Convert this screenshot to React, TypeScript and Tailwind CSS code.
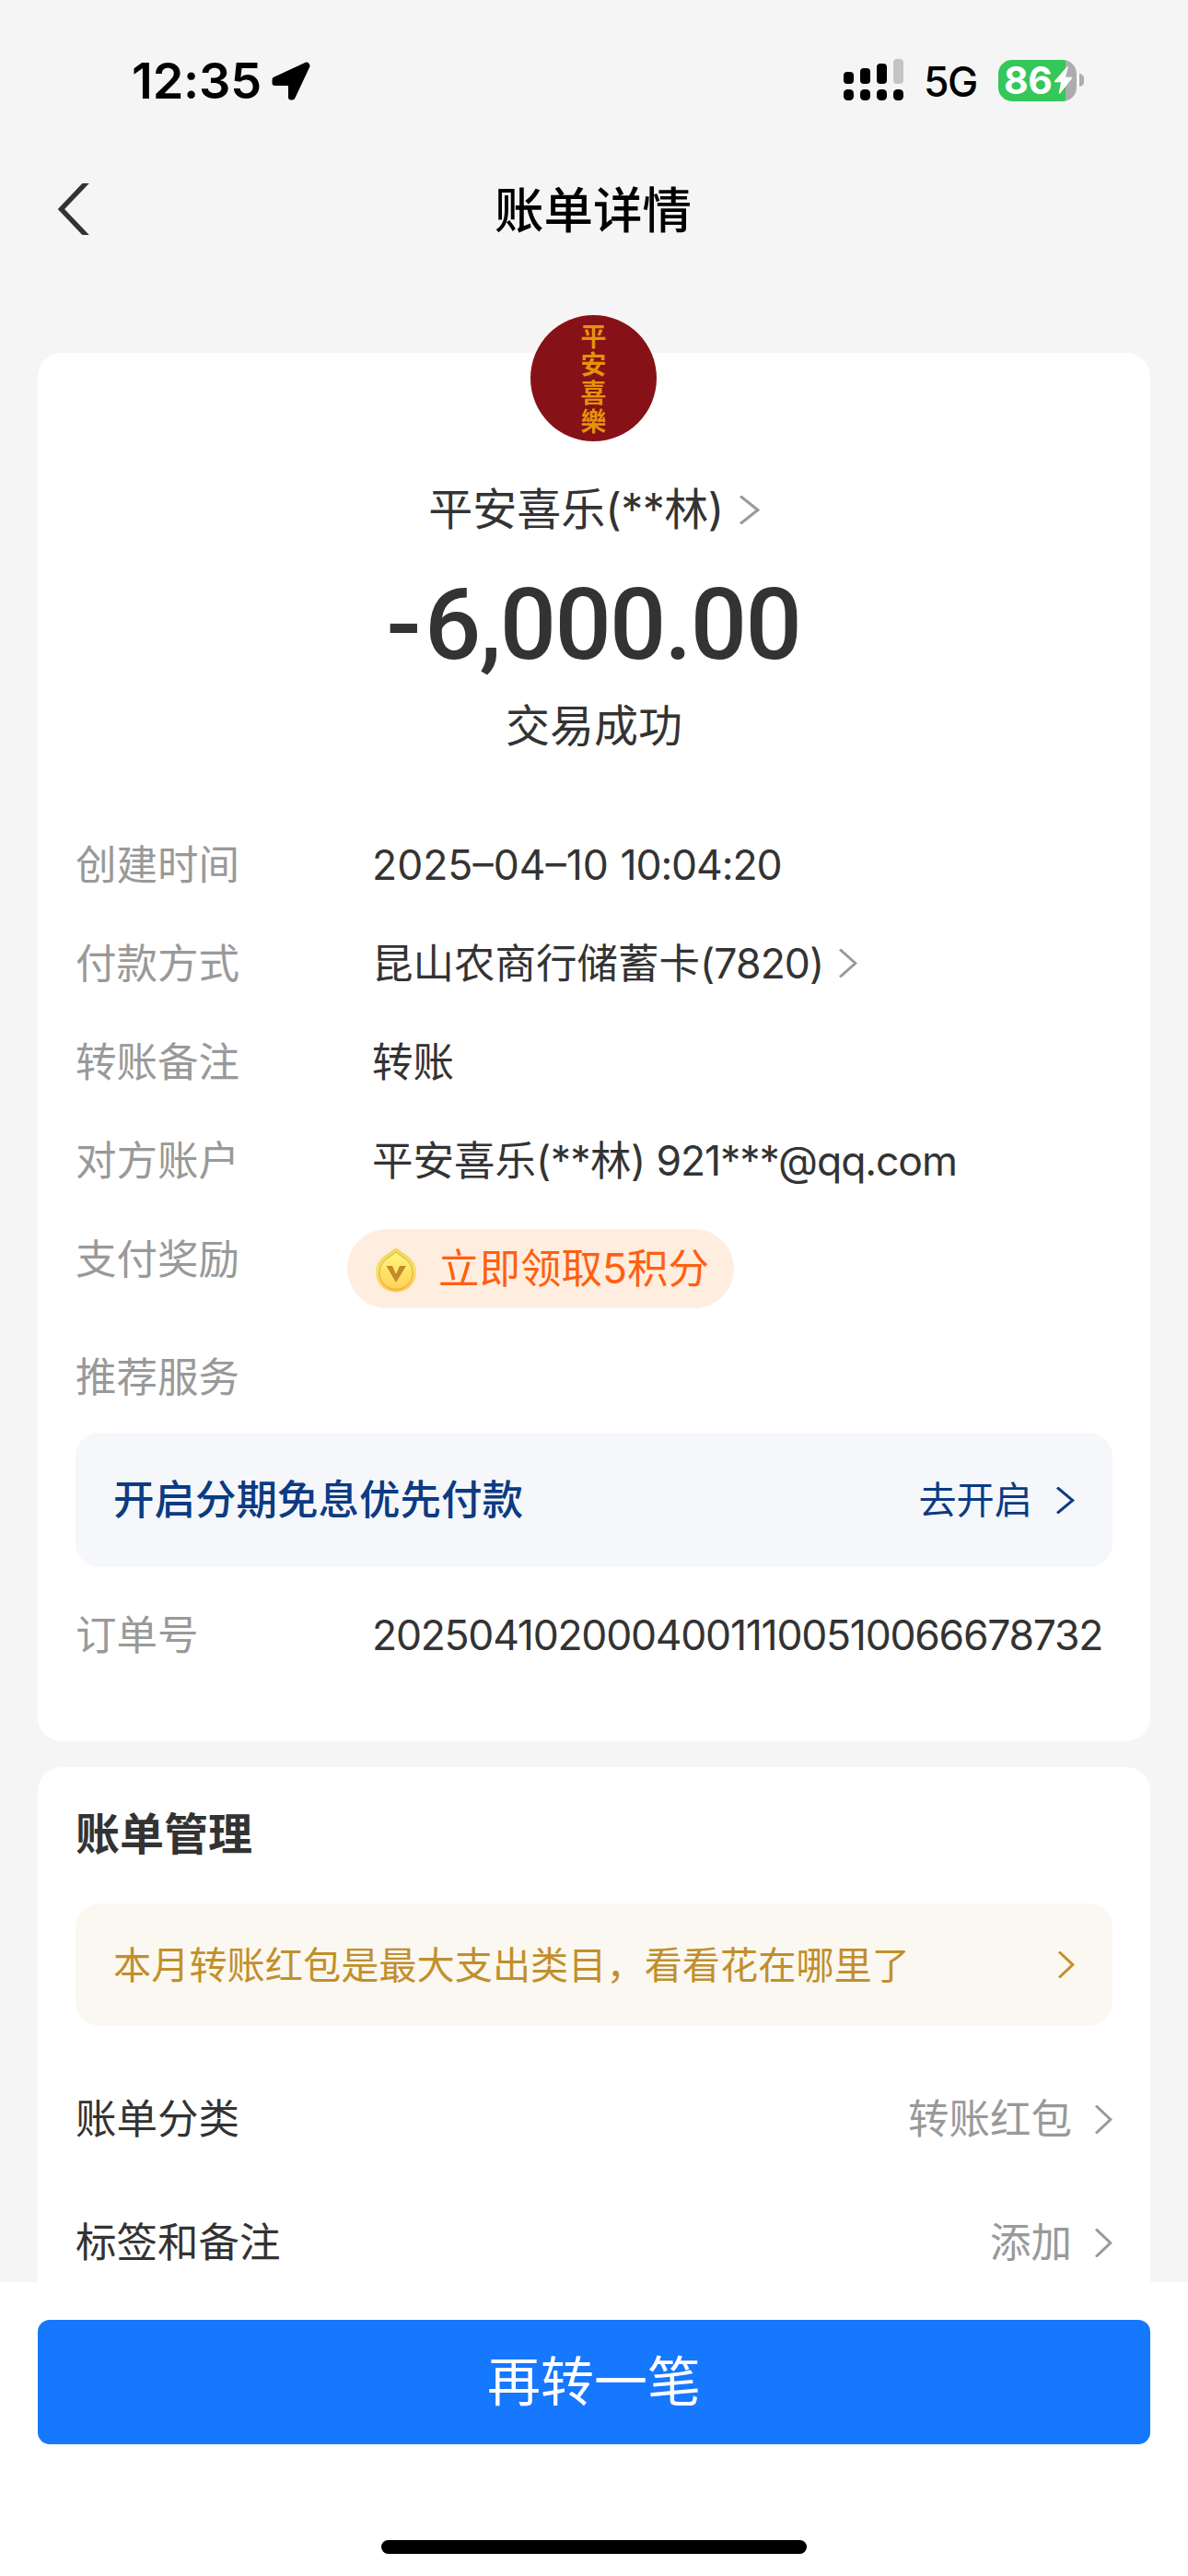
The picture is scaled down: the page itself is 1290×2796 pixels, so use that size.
import type { ReactNode } from "react";

function Chevron({ className = "", width = 20, height = 31, strokeWidth = 3 }: { className?: string; width?: number; height?: number; strokeWidth?: number }) {
  return (
    <svg className={className} width={width} height={height} viewBox={`0 0 ${width} ${height}`} fill="none" stroke="currentColor" strokeWidth={strokeWidth}>
      <path d={`M1 0.5 L${width - 2.2} ${height / 2} L1 ${height - 0.5}`} />
    </svg>
  );
}

function StatusBar() {
  return (
    <div className="flex h-[176px] items-start justify-between pt-[58px] pr-[113px] pl-[143px]">
      <div className="flex h-[60px] items-center">
        <span className="w-[152px] text-[54px] leading-[60px] font-semibold tracking-[-0.2px] whitespace-nowrap text-black">12:35</span>
        <svg width="42" height="42" viewBox="0 0 42 42">
          <path d="M38 3.5 L3.5 19.500 L3.5 23 L21 23 L21 38.5 L22.5 38.5 L38.500 4.5 Z" fill="#000" stroke="#000" strokeWidth="6" strokeLinejoin="round" />
        </svg>
      </div>
      <div className="flex h-[58px] items-center">
        <svg width="66" height="46" viewBox="0 0 66 46">
          <rect x="0" y="14" width="11" height="13" rx="4" />
          <rect x="18" y="10" width="11" height="17" rx="4" />
          <rect x="36" y="5" width="11" height="22" rx="4" />
          <rect x="54" y="0" width="11" height="27" rx="4" fill="#c4c4c4" />
          <rect x="0" y="33" width="11" height="12" rx="4.5" />
          <rect x="18" y="33" width="11" height="12" rx="4.5" />
          <rect x="36" y="33" width="11" height="12" rx="4.5" />
          <rect x="54" y="33" width="11" height="12" rx="4.5" />
        </svg>
        <span className="ml-[21px] w-[81px] pt-1 text-[44.5px] leading-[54px] font-medium tracking-[-1.5px] text-black">5G</span>
        <div className="flex items-center gap-[3px]">
          <div className="flex h-[45px] w-[85px] items-center rounded-[15px] bg-[linear-gradient(90deg,#34c759_73px,#adadad_73px)] pl-[6px]">
            <span className="w-[54px] text-[41px] leading-[45px] font-bold tracking-[-0.5px] text-white">86</span>
            <svg width="21" height="30" viewBox="0 0 21 30" fill="#fff" stroke="#fff" strokeWidth="1.5" strokeLinejoin="round">
              <path d="M15 1 L1.5 16.5 H9 L6.5 29 L19.5 12.5 H12 Z" />
            </svg>
          </div>
          <div className="h-[14px] w-[5px] rounded-r-[6px] bg-[#adadad]" />
        </div>
      </div>
    </div>
  );
}

function Row({ label, children }: { label: string; children?: ReactNode }) {
  return (
    <div className="flex h-[107px] items-center">
      <div className="w-[322px] shrink-0 text-[#999]">{label}</div>
      <div className="flex items-center whitespace-pre">{children}</div>
    </div>
  );
}

function PointsIcon() {
  return (
    <svg className="mt-1" width="44" height="50" viewBox="0 0 44 50">
      <defs>
        <linearGradient id="coin" x1="0" y1="0" x2="0" y2="1">
          <stop offset="0" stopColor="#e9d95f" />
          <stop offset="0.5" stopColor="#f7e168" />
          <stop offset="1" stopColor="#ffc44a" />
        </linearGradient>
        <linearGradient id="coinFace" x1="0" y1="0" x2="0" y2="1">
          <stop offset="0" stopColor="#fff878" />
          <stop offset="1" stopColor="#ffd05a" />
        </linearGradient>
      </defs>
      <path d="M22 1 C24 1 25 2 27 4 C31 7 35 9 38 12 A22 22 0 0 1 44 27 A22 21.500 0 0 1 0 27 A22 22 0 0 1 6 12 C9 9 13 7 17 4 C19 2 20 1 22 1 Z" fill="url(#coin)" />
      <path d="M22 5 C25 8 30 10.500 34.5 14.500 A18 18 0 1 1 9.500 14.500 C14 10.500 19 8 22 5 Z" fill="url(#coinFace)" stroke="#dfa93f" strokeWidth="1" />
      <path d="M11.500 20 H18 L22 29 L26 20 H33 L22 38 Z" fill="#c48a2c" />
    </svg>
  );
}

function SettingRow({ label, value }: { label: string; value: string }) {
  return (
    <div className="flex h-[134px] items-center">
      <span>{label}</span>
      <span className="mr-[25px] ml-auto text-[#999]">{value}</span>
      <Chevron className="text-[#999]" width={19} />
    </div>
  );
}

export default function App() {
  return (
    <div lang="zh-CN" className="flex h-[2796px] w-[1290px] flex-col overflow-hidden bg-[#f5f5f5] font-['Inter','Noto_Sans_CJK_SC',sans-serif] text-[44.5px] leading-[60px] text-[#333]">
      <StatusBar />

      <header className="grid h-[102px] grid-cols-3 items-center px-[61px]">
        <svg width="36" height="56" viewBox="0 0 36 56" fill="none" stroke="#333" strokeWidth="5.4">
          <path d="M34 -2 L5.5 28 L34 58" />
        </svg>
        <h1 className="pt-[3px] pr-[2px] text-center text-[53.5px] leading-[70px] font-medium text-black">账单详情</h1>
      </header>

      <main className="mt-[105px] flex h-[2094px] flex-col gap-7 px-[41px]">
        <section className="flex h-[1507px] shrink-0 flex-col rounded-[26px] bg-white px-[41px]">
          <div className="-mt-[41px] mr-px flex size-[137px] shrink-0 items-center justify-center self-center rounded-full bg-[#861217]">
            <span className="pt-1 font-['Noto_Sans_CJK_TC',sans-serif] text-[28px] leading-[40px] font-bold tracking-[2.8px] text-[#e5920b] blur-[0.6px] [writing-mode:vertical-rl]">平安喜樂</span>
          </div>
          <div className="mt-[44px] flex h-[60px] items-center self-center text-[48px]">
            <span>平安喜乐</span>
            <span className="mr-[17px] tracking-[-0.5px]">(**林)</span>
            <Chevron className="text-[#999]" width={22} />
          </div>
          <div className="mt-[30px] h-[130px] self-center font-['Roboto',sans-serif] text-[108px] leading-[130px] font-medium tracking-[-1.8px] whitespace-nowrap">
            <span className="mr-[5px] inline-block origin-right scale-x-[1.05]">-</span>6,000.00
          </div>
          <div className="mt-[15px] self-center text-[48px]">交易成功</div>

          <div className="mt-[67px] flex flex-col">
            <Row label="创建时间">
              <span>2025–04–10 </span>
              <span className="tracking-[-1.1px]">10:04:20</span>
            </Row>
            <Row label="付款方式">
              昆山农商行储蓄卡<span className="tracking-[-0.9px]">(7820)</span>
              <Chevron className="ml-[17px] text-[#999]" />
            </Row>
            <Row label="转账备注">转账</Row>
            <Row label="对方账户">
              平安喜乐<span className="tracking-[-0.6px]">(**林) </span>
              <span className="tracking-[-1.1px]">921***@qq.com</span>
            </Row>
            <Row label="支付奖励">
              <div className="mt-[21px] -ml-[27px] flex h-[86px] w-[420px] items-center rounded-full bg-[#ffeedf] pl-[31px] text-[#ff6010]">
                <PointsIcon />
                <span className="ml-[24px]">立即领取5积分</span>
              </div>
            </Row>
          </div>
          <div className="mt-[45px] text-[#999]">推荐服务</div>
          <div className="mt-[30px] flex h-[146px] shrink-0 items-center rounded-[26px] bg-[#f5f7fb] pr-[41px] pl-[41px] text-[#0b3b82]">
            <span className="font-medium">开启分期免息优先付款</span>
            <span className="mr-[26px] ml-auto text-[41.2px]">去开启</span>
            <Chevron height={29} />
          </div>
          <div className="mt-5">
            <Row label="订单号">
              <span className="tracking-[-1.26px]">20250410200040011100510066678732</span>
            </Row>
          </div>
        </section>

        <section className="h-[559px] shrink-0 overflow-hidden rounded-t-[26px] bg-white px-[41px] pt-[43px]">
          <h2 className="text-[48px] font-bold">账单管理</h2>
          <div className="mt-[45px] mb-[34px] flex h-[133px] items-center justify-between rounded-[26px] bg-[#fbf8f1] px-[41px] text-[41.2px] text-[#c18f2c]">
            <span>本月转账红包是最大支出类目，看看花在哪里了</span>
            <Chevron height={29} width={18} />
          </div>
          <SettingRow label="账单分类" value="转账红包" />
          <SettingRow label="标签和备注" value="添加" />
        </section>
      </main>

      <footer className="flex h-[319px] shrink-0 flex-col items-center bg-white px-[41px] pt-[41px]">
        <button className="h-[135px] w-full rounded-[13px] bg-[#1677ff] pb-[2px] text-[58px] text-white">再转一笔</button>
        <div className="mt-[104px] h-[15px] w-[462px] rounded-full bg-black" />
      </footer>
    </div>
  );
}
